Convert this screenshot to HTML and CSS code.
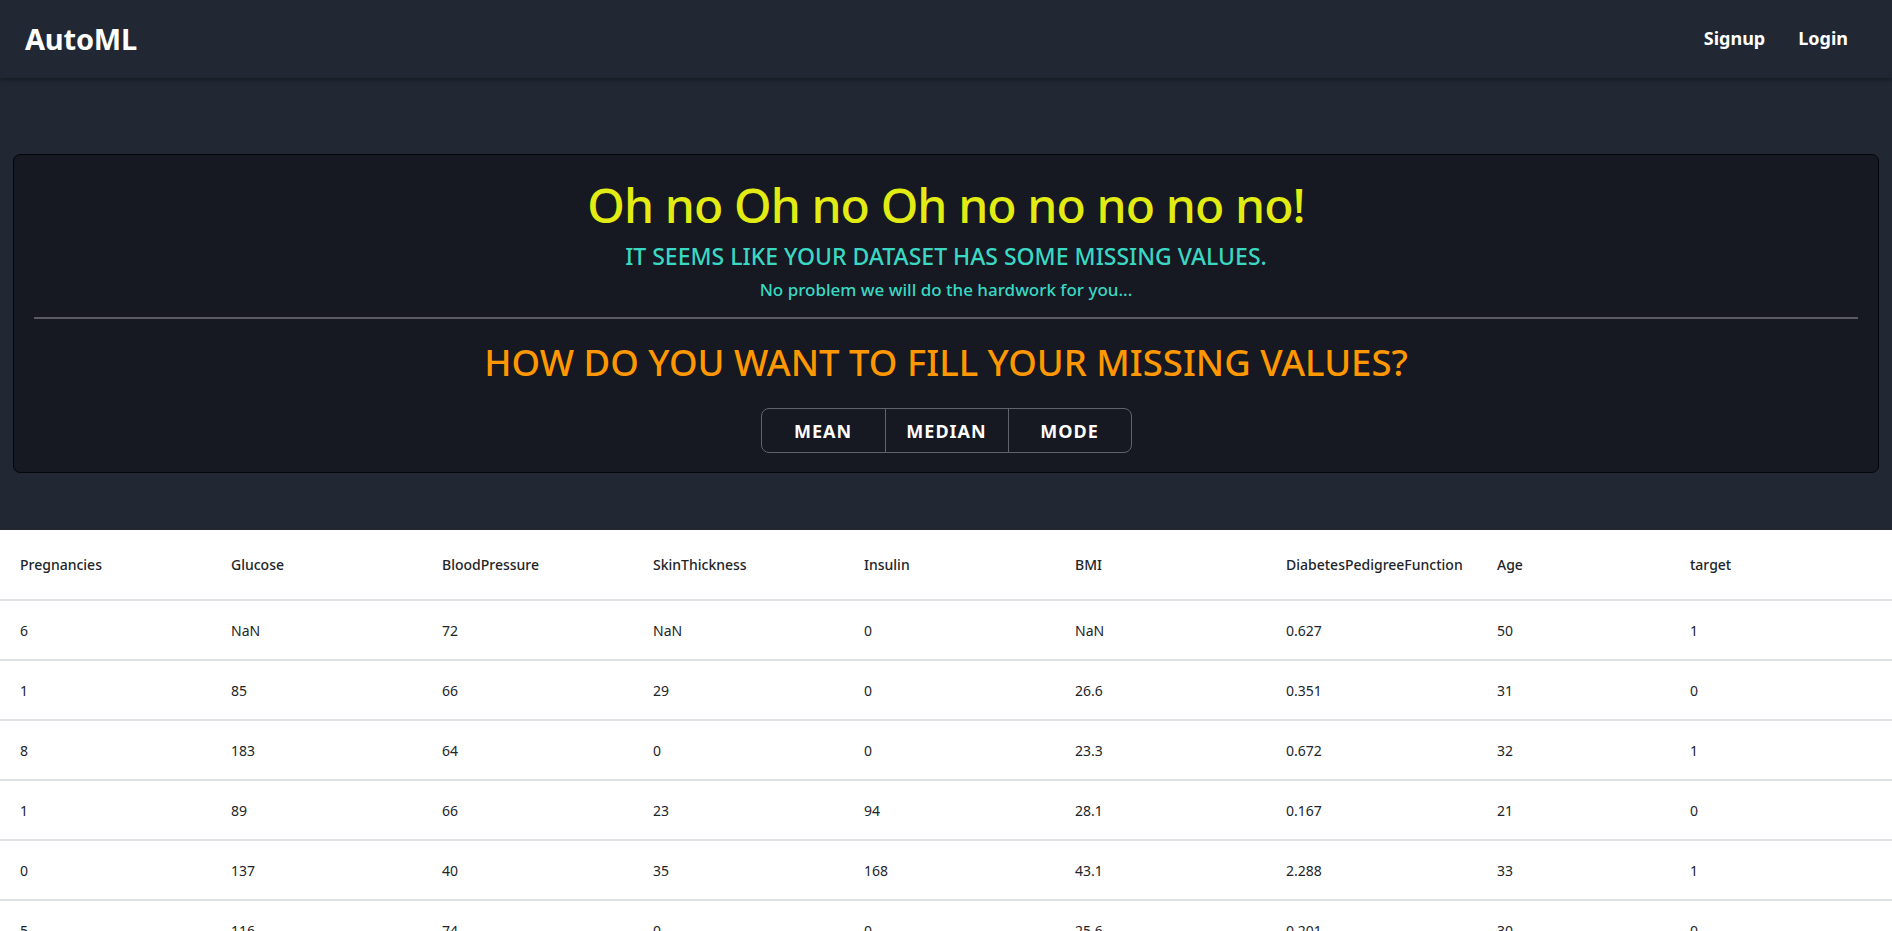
FILE: index.html
```html
<!DOCTYPE html>
<html lang="en">
<head>
<meta charset="utf-8">
<title>AutoML</title>
<link rel="stylesheet" href="styles.css">
</head>
<body>
<nav class="navbar">
  <a class="brand" href="#">AutoML</a>
  <div class="nav-links">
    <a href="#">Signup</a>
    <a href="#">Login</a>
  </div>
</nav>
<main class="main">
  <section class="card">
    <h1 class="title">Oh no Oh no Oh no no no no no!</h1>
    <h2 class="subtitle">IT SEEMS LIKE YOUR DATASET HAS SOME MISSING VALUES.</h2>
    <p class="note">No problem we will do the hardwork for you...</p>
    <hr class="divider">
    <h2 class="question">HOW DO YOU WANT TO FILL YOUR MISSING VALUES?</h2>
    <div class="btn-group">
      <button class="btn">MEAN</button>
      <button class="btn">MEDIAN</button>
      <button class="btn">MODE</button>
    </div>
  </section>
</main>
<div class="table-wrap">
<table class="data">
  <thead>
    <tr><th>Pregnancies</th><th>Glucose</th><th>BloodPressure</th><th>SkinThickness</th><th>Insulin</th><th>BMI</th><th>DiabetesPedigreeFunction</th><th>Age</th><th>target</th></tr>
  </thead>
  <tbody>
    <tr><td>6</td><td>NaN</td><td>72</td><td>NaN</td><td>0</td><td>NaN</td><td>0.627</td><td>50</td><td>1</td></tr>
    <tr><td>1</td><td>85</td><td>66</td><td>29</td><td>0</td><td>26.6</td><td>0.351</td><td>31</td><td>0</td></tr>
    <tr><td>8</td><td>183</td><td>64</td><td>0</td><td>0</td><td>23.3</td><td>0.672</td><td>32</td><td>1</td></tr>
    <tr><td>1</td><td>89</td><td>66</td><td>23</td><td>94</td><td>28.1</td><td>0.167</td><td>21</td><td>0</td></tr>
    <tr><td>0</td><td>137</td><td>40</td><td>35</td><td>168</td><td>43.1</td><td>2.288</td><td>33</td><td>1</td></tr>
    <tr><td>5</td><td>116</td><td>74</td><td>0</td><td>0</td><td>25.6</td><td>0.201</td><td>30</td><td>0</td></tr>
    <tr><td>3</td><td>78</td><td>50</td><td>32</td><td>88</td><td>31.0</td><td>0.248</td><td>26</td><td>1</td></tr>
    <tr><td>10</td><td>115</td><td>0</td><td>0</td><td>0</td><td>35.3</td><td>0.134</td><td>29</td><td>0</td></tr>
  </tbody>
</table>
</div>
</body>
</html>
```
FILE: styles.css
```css
* { box-sizing: border-box; }
html, body { margin: 0; padding: 0; }
body {
  background: #212834;
  font-family: "Noto Sans", "Open Sans", sans-serif;
  color: #fff;
}
.navbar {
  height: 78px;
  display: flex;
  align-items: center;
  justify-content: space-between;
  padding: 0 44px 2px 25px;
  background: #212834;
  box-shadow: 0 2px 4px rgba(0,0,0,0.35);
  position: relative;
}
.brand {
  color: #fff;
  text-decoration: none;
  font-weight: 700;
  font-size: 29px;
  letter-spacing: -0.2px;
}
.nav-links { display: flex; gap: 33px; }
.nav-links a {
  color: #fff;
  text-decoration: none;
  font-weight: 700;
  font-size: 18px;
}
.main { padding: 76px 13px 57px; }
.card {
  background: #161822;
  border: 1px solid #05060a;
  border-radius: 7px;
  padding: 20px 20px 19px;
  text-align: center;
}
.title {
  margin: 0;
  color: #e3ec12;
  font-size: 48px;
  font-weight: 500;
  letter-spacing: -0.9px;
  line-height: 60px;
}
.subtitle {
  margin: 6px 0 0;
  color: #3ad8c2;
  font-size: 23px;
  font-weight: 500;
  line-height: 30px;
}
.note {
  margin: 7px 0 0;
  color: #3ad8c2;
  font-size: 17px;
  font-weight: 500;
  line-height: 24px;
}
.divider {
  margin: 15px 0 0;
  border: 0;
  height: 2px;
  background: #595a66;
}
.question {
  margin: 20px 0 0;
  color: #ff9800;
  font-size: 36.5px;
  font-weight: 500;
  line-height: 46px;
}
.btn-group {
  display: inline-flex;
  margin-top: 23px;
  border: 1px solid #60636f;
  border-radius: 8px;
  overflow: hidden;
}
.btn {
  width: 123px;
  height: 43px;
  background: transparent;
  border: 0;
  color: #fff;
  font-family: inherit;
  font-weight: 700;
  font-size: 18px;
  letter-spacing: 1px;
}
.btn + .btn { border-left: 1px solid #60636f; }
.table-wrap { background: #fff; }
.data {
  width: 100%;
  border-collapse: collapse;
  table-layout: fixed;
  color: #212529;
  font-size: 14px;
}
.data th, .data td {
  text-align: left;
  padding: 0 20px;
  border-bottom: 2px solid #dee2e6;
  white-space: nowrap;
}
.data th { height: 70px; font-weight: 500; }
.data td { height: 60px; font-weight: 400; }
.data th:nth-child(-n+7) { width: 211px; }
.data th:nth-child(8) { width: 193px; }
```
